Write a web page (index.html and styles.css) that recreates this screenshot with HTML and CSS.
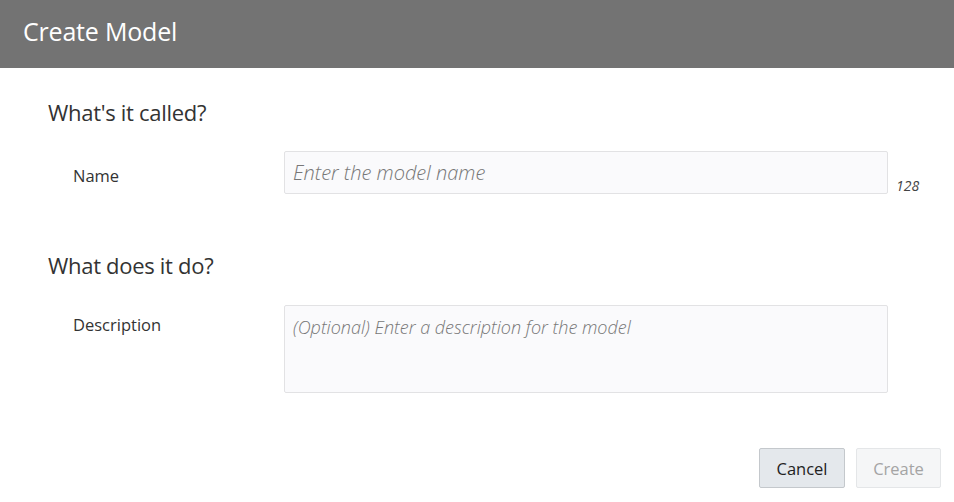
FILE: index.html
```html
<!DOCTYPE html>
<html lang="en">
<head>
    <meta charset="UTF-8">
    <title>Create Model</title>
    <link rel="stylesheet" href="styles.css">
</head>
<body>
    <div class="dialog">
        <header class="dialog-header">
            <h1>Create Model</h1>
        </header>

        <main class="dialog-body">
            <section class="form-section">
                <h2>What's it called?</h2>
                <div class="form-row">
                    <label for="model-name" class="label-name">Name</label>
                    <div class="field">
                        <input id="model-name" type="text" placeholder="Enter the model name">
                        <span class="counter">128</span>
                    </div>
                </div>
            </section>

            <section class="form-section">
                <h2>What does it do?</h2>
                <div class="form-row">
                    <label for="model-desc">Description</label>
                    <div class="field">
                        <textarea id="model-desc" placeholder="(Optional) Enter a description for the model"></textarea>
                    </div>
                </div>
            </section>
        </main>

        <footer class="dialog-footer">
            <button class="btn btn-cancel">Cancel</button>
            <button class="btn btn-create" disabled>Create</button>
        </footer>
    </div>
</body>
</html>
```

FILE: styles.css
```css
body {
    margin: 0;
    font-family: "Open Sans", "Noto Sans", Arial, sans-serif;
    color: #333;
    background: #fff;
}
.dialog {
    width: 954px;
    height: 502px;
    display: flex;
    flex-direction: column;
}
.dialog-header {
    height: 68px;
    flex-shrink: 0;
    background-color: #737373;
    display: flex;
    align-items: center;
    padding: 0 23px;
}
.dialog-header h1 {
    margin: 0;
    color: #fff;
    font-size: 25px;
    font-weight: 400;
    letter-spacing: -0.2px;
    padding-bottom: 6px;
}
.dialog-body {
    padding: 29px 0 0 48px;
}
.form-section h2 {
    margin: 0;
    font-size: 22px;
    font-weight: 400;
    color: #333;
    line-height: 30px;
    letter-spacing: -0.3px;
}
.form-section + .form-section {
    margin-top: 56px;
}
.form-section + .form-section .form-row {
    margin-top: 25px;
}
.form-row {
    display: flex;
    align-items: flex-start;
    margin-top: 24px;
}
.form-row label {
    width: 211px;
    padding-left: 25px;
    font-size: 16.5px;
    line-height: 40px;
    color: #333;
}
.form-row .label-name {
    line-height: 24px;
    padding-top: 13px;
}
.field {
    display: flex;
    align-items: flex-end;
}
.field input,
.field textarea {
    box-sizing: border-box;
    width: 604px;
    border: 1px solid #e2e2e4;
    border-radius: 2px;
    background: #fafafc;
    font-family: inherit;
    font-size: 20px;
    color: #333;
    padding: 0 8px;
    outline: none;
}
.field input {
    height: 43px;
}
.field textarea {
    height: 88px;
    padding-top: 9px;
    font-size: 18px;
    resize: none;
}
.field ::placeholder {
    color: #777;
    font-style: italic;
    font-weight: 300;
}
.counter {
    margin-left: 8px;
    font-size: 14px;
    font-style: italic;
    color: #444;
    line-height: 16px;
}
.dialog-footer {
    margin-top: auto;
    display: flex;
    justify-content: flex-end;
    gap: 11px;
    padding: 0 13px 14px 0;
}
.btn {
    height: 40px;
    padding: 0;
    border-radius: 2px;
    font-family: inherit;
    font-size: 16.5px;
}
.btn-cancel {
    width: 86px;
    background-color: #e4e8ec;
    border: 1px solid #c4c8cc;
    color: #222;
}
.btn-create {
    width: 85px;
    background-color: #f5f6f7;
    border: 1px solid #e4e6e8;
    color: #a4a4a4;
}
```
